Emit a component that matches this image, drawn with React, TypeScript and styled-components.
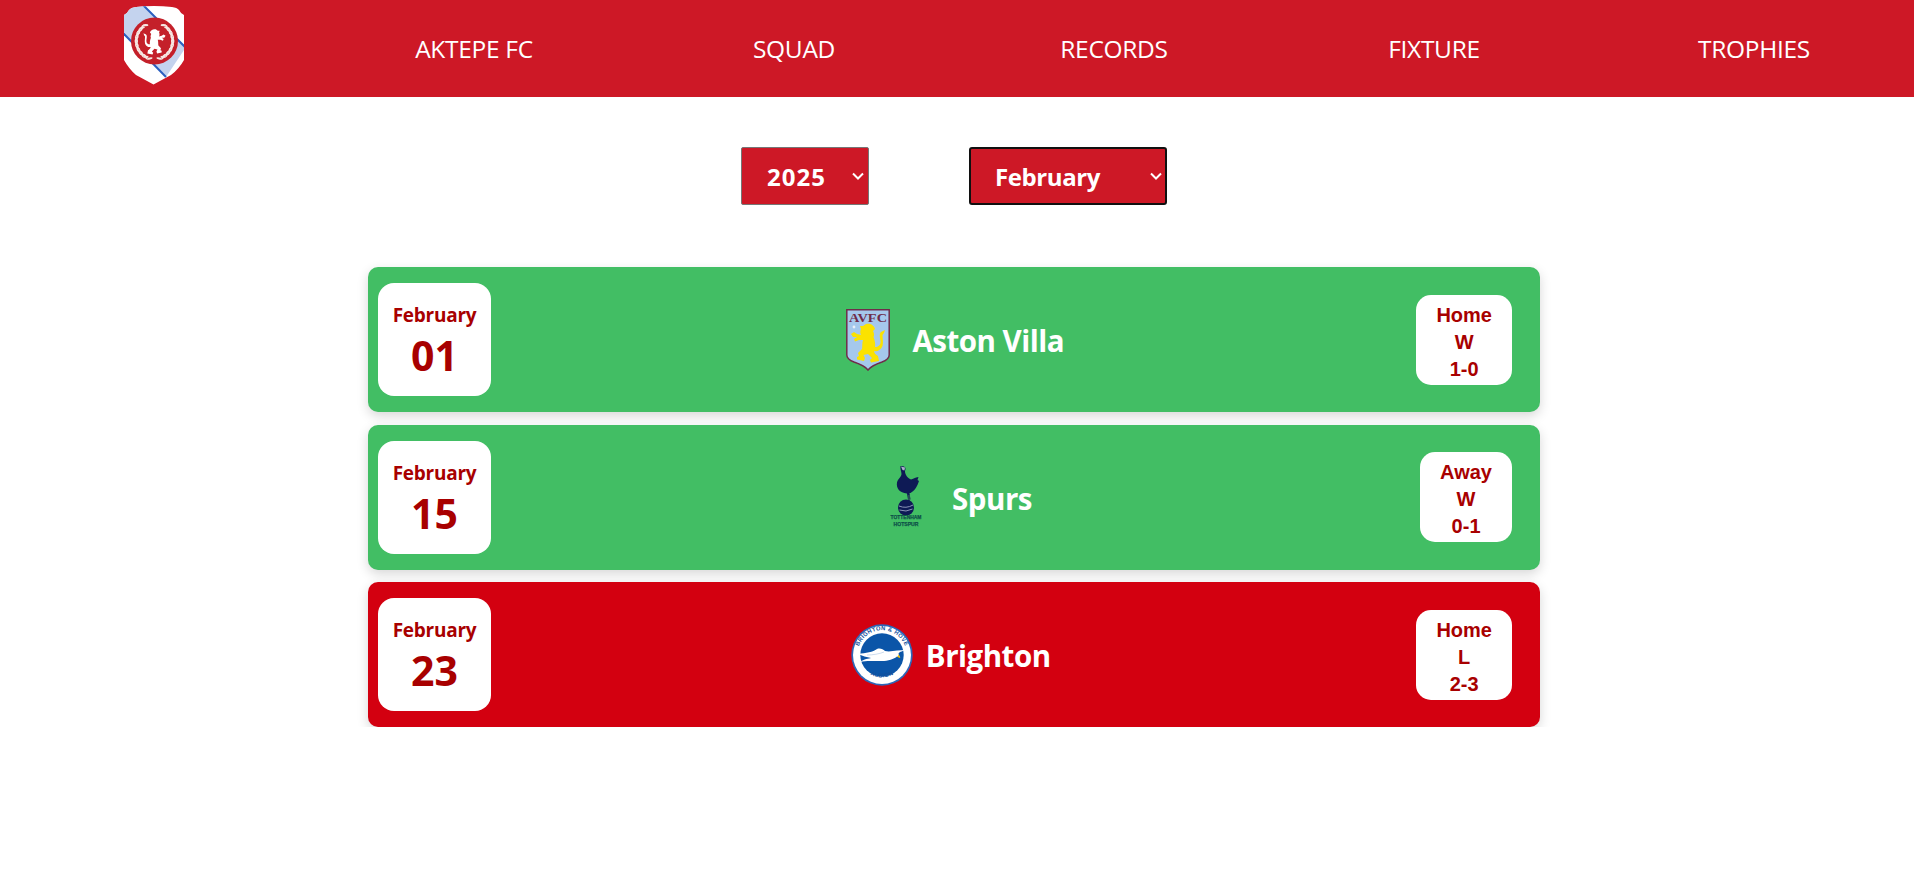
import React, { useState } from "react";
import styled, { createGlobalStyle } from "styled-components";

const Global = createGlobalStyle`
  html, body { margin: 0; padding: 0; background: #fff; }
  body { font-family: "Open Sans", "Noto Sans", sans-serif; }
`;

const NavBar = styled.nav`
  height: 97px;
  background: #cd1826;
  display: grid;
  grid-template-columns: 314px repeat(5, 320px);
  align-items: center;
`;
const Brand = styled.a`
  display: flex;
  justify-content: center;
  align-self: start;
  padding: 5px 6px 0 0;
`;
const NavLink = styled.a`
  color: #fff;
  font-size: 24.5px;
  text-align: center;
  text-transform: uppercase;
  letter-spacing: -0.3px;
`;

const Main = styled.main`
  width: 1908px;
  display: flex;
  flex-direction: column;
  align-items: center;
`;
const Filters = styled.div`
  display: flex;
  gap: 100px;
  margin-top: 50px;
  margin-bottom: 62px;
`;
const SelectWrap = styled.div<{ $w: number }>`
  position: relative;
  width: ${(p) => p.$w}px;
  height: 58px;
  color: #fff;
`;
const Select = styled.select<{ $focused?: boolean; $track: number }>`
  appearance: none;
  width: 100%;
  height: 100%;
  box-sizing: border-box;
  background: #cd1826;
  color: #fff;
  font: 700 24px "Open Sans", sans-serif;
  letter-spacing: ${(p) => p.$track}px;
  padding: 0 0 0 ${(p) => (p.$focused ? 24 : 25)}px;
  border: ${(p) => (p.$focused ? "2px solid #101010" : "1px solid #767676")};
  border-radius: ${(p) => (p.$focused ? 3 : 2)}px;
  outline: none;
`;
const Chevron = styled.svg`
  position: absolute;
  right: 5px;
  top: 25px;
  pointer-events: none;
`;

const List = styled.div`
  width: 1172px;
  display: flex;
  flex-direction: column;
  gap: 12.5px;
`;
const Card = styled.article<{ $win: boolean }>`
  height: 145px;
  flex: none;
  border-radius: 10px;
  background: ${(p) => (p.$win ? "#42be64" : "#d30010")};
  box-shadow: 0 4px 12px rgba(0, 0, 0, 0.16);
  display: flex;
  align-items: center;
  padding: 0 28px 0 10px;
`;
const DateBox = styled.div`
  width: 113px;
  height: 113px;
  box-sizing: border-box;
  padding-top: 3px;
  background: #fff;
  border-radius: 16px;
  color: #a80000;
  display: flex;
  flex-direction: column;
  align-items: center;
  justify-content: center;
  font-weight: 700;
`;
const Month = styled.div`
  font-size: 19px;
  line-height: 28px;
  letter-spacing: -0.25px;
`;
const Day = styled.div`
  font-size: 41px;
  line-height: 52px;
`;
const Team = styled.div<{ $shift: number }>`
  flex: 1;
  display: flex;
  align-items: center;
  justify-content: center;
  color: #fff;
  padding-left: ${(p) => Math.max(p.$shift, 0)}px;
  padding-right: ${(p) => Math.max(-p.$shift, 0)}px;
`;
const Crest = styled.div<{ $gap: number }>`
  display: flex;
  margin-right: ${(p) => p.$gap}px;
`;
const TeamName = styled.div`
  font-size: 29.5px;
  line-height: 42px;
  padding-top: 3px;
  font-weight: 700;
  letter-spacing: -0.5px;
`;
const Result = styled.div`
  background: #fff;
  border-radius: 15px;
  padding: 7px 20px 2px;
  color: #a80000;
  font: 700 20px/27px "Liberation Sans", Arial, sans-serif;
  text-align: center;
`;

const LION =
  "M20 15 C24 14 28 16 29 20 L27 22 C28 24 28.5 26 27.5 28 C29 32 29.5 35 29 38 C32 38 35 36 34.5 32 C34 28 33 25 35 23 L39 21 L38 24 L36.5 26 C36.5 29 37.5 33 36.5 37 C35 41 31 43 28 42 C28 44 30 46 32 47 L33 52 L25 53.5 L24 51 L26 49 L22 45 L17.5 46 L19 49 L18 52 L11 50.5 L11 48 L13 47 L12 44 L16 40 C16.5 37 16 34 17 31 L13 31 L9 32.5 L8 30 L11 28 L7 28 L5 25 L8 23 L11 25 L15 26 C14 24 14 22 15 20 L14 17 L17 17 Z";

const laurelLeaves = Array.from({ length: 10 }, (_, i) => i);

const ShieldLogo = () => (
  <svg width="60" height="80" viewBox="0 0 60 80">
    <defs>
      <clipPath id="shield">
        <path d="M0 10 Q3 9 5 5 Q7 2.5 12 2 Q30 0 48 2 Q53 2.5 55 5 Q57 9 60 10 L60 55 Q55 64 47 70 L29.5 79.5 L12 70 Q5 64 0 55 Z" />
      </clipPath>
    </defs>
    <g clipPath="url(#shield)">
      <rect width="60" height="80" fill="#fff" />
      <polygon points="20,0 62,42 42,72 -2,27 -2,0" fill="#c4d3ee" />
      <path d="M19 0 L61 42" stroke="#2a5fc0" strokeWidth="2" fill="none" />
      <path d="M-2 27 L42 72" stroke="#2a5fc0" strokeWidth="2" fill="none" />
    </g>
    <circle cx="30.5" cy="36" r="23.5" fill="#c4202a" />
    {laurelLeaves.map((i) => {
      const deg = 22 + i * 13.5;
      return (
        <g key={i}>
          {[-1, 1].map((side) => (
            <g key={side} transform={`translate(30.5 36) rotate(${side * (180 - deg)})`}>
              <ellipse cx="-2.2" cy="-18" rx="2.9" ry="1.1" fill="#f6e7e3" transform="rotate(-35 -2.2 -18)" />
              <ellipse cx="2.2" cy="-18" rx="2.9" ry="1.1" fill="#f6e7e3" transform="rotate(35 2.2 -18)" />
            </g>
          ))}
        </g>
      );
    })}
    <g transform="translate(44.8 14.6) scale(-0.65 0.65)">
      <path d={LION} fill="#fff" />
    </g>
  </svg>
);

const VillaLogo = () => (
  <svg width="44" height="62" viewBox="0 0 44 62">
    <path
      d="M0.8 0.8 H43.2 V46 C43.2 50 40 51.5 36 53 C30 55 25 57 22 61 C19 57 14 55 8 53 C4 51.5 0.8 50 0.8 46 Z"
      fill="#a5c8ec"
      stroke="#6f2c4a"
      strokeWidth="1.5"
    />
    <text x="22" y="13.4" textAnchor="middle" fontFamily="Liberation Serif, serif" fontWeight="700" fontSize="13" fill="#6f2c4a" textLength="38" lengthAdjust="spacingAndGlyphs">
      AVFC
    </text>
    <circle cx="8" cy="18" r="1.4" fill="#e8f0f8" />
    <path d={LION} fill="#fbe200" />
  </svg>
);

const SpursLogo = () => (
  <svg width="34" height="64" viewBox="0 0 34 64">
    <path
      d="M10.5 1 C13.5 0.5 16 2 15.5 4.5 C14.5 6 15 8 16 10 C17 12 19 13.5 21 14.5 C23 14 25 12.5 28.5 12 L27.5 15 L29 16 C27.5 21 24.5 26 20.5 28 L19.5 28 L20.5 34.5 L18 34.5 L17 28.5 C9.5 28 6 23 7 17.5 C7.8 14 11.5 12 11.5 9 C11.5 6.5 10 4 10.5 1 Z"
      fill="#0e1a55"
    />
    <path d="M11 1.5 L15 2.5 L14.5 5.5 L12.5 5 Z" fill="#aab0c8" />
    <path d="M19 30 L19 36" stroke="#2c5a58" strokeWidth="1.6" />
    <circle cx="16" cy="42.5" r="8" fill="#0e1a55" />
    <path d="M9 41 Q16 44 23 40 M9.5 45 Q16 47.5 22.5 44" stroke="#8a94b8" strokeWidth="1" fill="none" />
    <text x="16" y="54" textAnchor="middle" fontFamily="Liberation Sans, sans-serif" fontWeight="700" fontSize="5.4" fill="#0d5048" stroke="#0d5048" strokeWidth="0.25" textLength="31" lengthAdjust="spacingAndGlyphs">
      TOTTENHAM
    </text>
    <text x="16" y="61" textAnchor="middle" fontFamily="Liberation Sans, sans-serif" fontWeight="700" fontSize="5.4" fill="#0d5048" stroke="#0d5048" strokeWidth="0.25" textLength="25" lengthAdjust="spacingAndGlyphs">
      HOTSPUR
    </text>
  </svg>
);

const BrightonLogo = () => (
  <svg width="62" height="62" viewBox="0 0 62 62">
    <circle cx="31" cy="31" r="30.7" fill="#2d66b8" />
    <circle cx="31" cy="31" r="29" fill="#fff" />
    <circle cx="31" cy="31" r="21.7" fill="#0b55a8" />
    <defs>
      <path id="bhTop" d="M6.5 33 A24.6 24.6 0 1 1 55.5 33" />
      <path id="bhBottom" d="M8 40 A26.5 26.5 0 0 0 54 40" />
    </defs>
    <text fontFamily="Liberation Sans, sans-serif" fontWeight="700" fontSize="5.8" letterSpacing="0.35" fill="#14509c">
      <textPath href="#bhTop" startOffset="50%" textAnchor="middle">BRIGHTON &amp; HOVE</textPath>
    </text>
    <text fontFamily="Liberation Sans, sans-serif" fontWeight="700" fontSize="5.8" letterSpacing="0.35" fill="#14509c">
      <textPath href="#bhBottom" startOffset="50%" textAnchor="middle">ALBION</textPath>
    </text>
    <path
      d="M7 30 C15 29 22 28 26 25 C29 24 32 25 34 27 C38 28 42 27 46 26.5 L55 26 C50 27.5 48 28 47.5 30 L49 33.5 L46 32.5 C43 35 37 37 31 37 C24 37.5 17 36 9 38 C13 35 18 34.5 20 34 C16 33 11 32 7 30 Z"
      fill="#fff"
    />
    <path d="M16 31 C22 31 28 30 33 28" stroke="#9db8dc" strokeWidth="0.5" fill="none" />
    <path d="M47.5 30.5 L49.6 34 L46.5 33 Z" fill="#f0c000" />
  </svg>
);

const fixtures = [
  { day: "01", name: "Aston Villa", crest: <VillaLogo />, gap: 22, shift: 3, venue: "Home", res: "W", score: "1-0", win: true },
  { day: "15", name: "Spurs", crest: <SpursLogo />, gap: 28, shift: 11, venue: "Away", res: "W", score: "0-1", win: true },
  { day: "23", name: "Brighton", crest: <BrightonLogo />, gap: 13, shift: -6, venue: "Home", res: "L", score: "2-3", win: false },
];

const months = ["January", "February", "March", "April", "May", "June", "July", "August", "September", "October", "November", "December"];

const ChevronIcon = () => (
  <Chevron width="12" height="8" viewBox="0 0 12 8">
    <path d="M1 1.5 L6 6.5 L11 1.5" fill="none" stroke="#fff" strokeWidth="2" />
  </Chevron>
);

export default function App() {
  const [year, setYear] = useState("2025");
  const [month, setMonth] = useState("February");
  return (
    <>
      <Global />
      <NavBar>
        <Brand><ShieldLogo /></Brand>
        <NavLink>Aktepe FC</NavLink>
        <NavLink>Squad</NavLink>
        <NavLink>Records</NavLink>
        <NavLink>Fixture</NavLink>
        <NavLink>Trophies</NavLink>
      </NavBar>
      <Main>
        <Filters>
          <SelectWrap $w={128}>
            <Select $track={1} value={year} onChange={(e) => setYear(e.target.value)}>
              <option>2024</option>
              <option>2025</option>
            </Select>
            <ChevronIcon />
          </SelectWrap>
          <SelectWrap $w={198}>
            <Select $focused $track={-0.4} value={month} onChange={(e) => setMonth(e.target.value)}>
              {months.map((m) => <option key={m}>{m}</option>)}
            </Select>
            <ChevronIcon />
          </SelectWrap>
        </Filters>
        <List>
          {fixtures.map((f) => (
            <Card key={f.day} $win={f.win}>
              <DateBox>
                <Month>February</Month>
                <Day>{f.day}</Day>
              </DateBox>
              <Team $shift={f.shift}>
                <Crest $gap={f.gap}>{f.crest}</Crest>
                <TeamName>{f.name}</TeamName>
              </Team>
              <Result>
                <div>{f.venue}</div>
                <div>{f.res}</div>
                <div>{f.score}</div>
              </Result>
            </Card>
          ))}
        </List>
      </Main>
    </>
  );
}
